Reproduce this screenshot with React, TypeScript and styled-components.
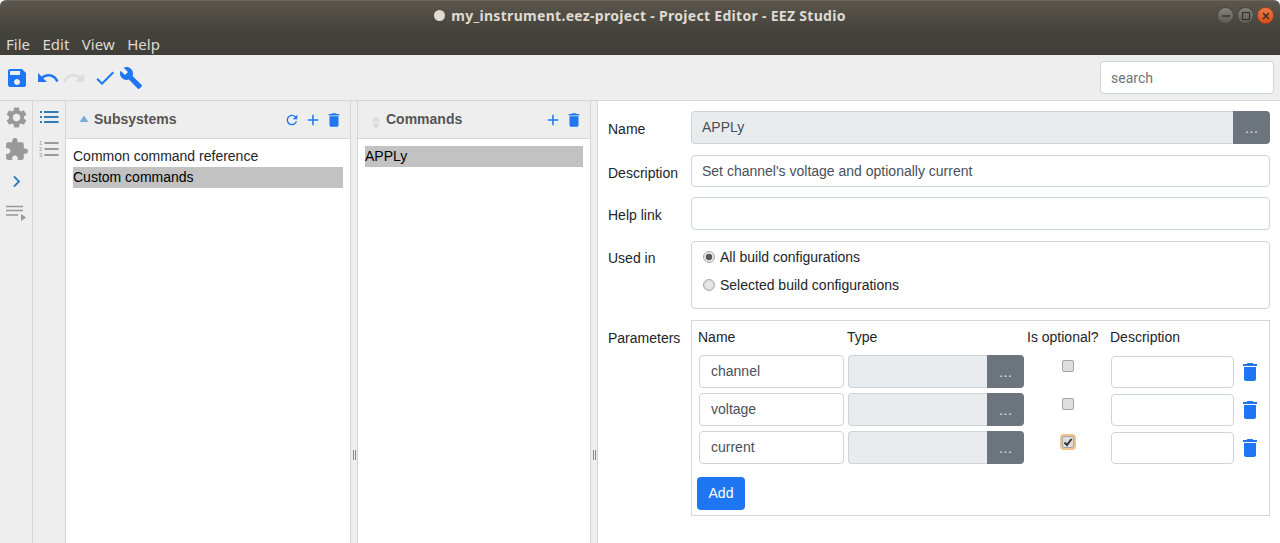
import React from 'react';
import styled, { createGlobalStyle } from 'styled-components';
import {
  MdAdd,
  MdBuild,
  MdCheck,
  MdChevronRight,
  MdDelete,
  MdExtension,
  MdRedo,
  MdRefresh,
  MdSave,
  MdSettings,
  MdUndo,
} from 'react-icons/md';

const GlobalStyle = createGlobalStyle`
  html, body { margin: 0; padding: 0; height: 100%; overflow: hidden; }
  body { font-family: "Liberation Sans", Arial, sans-serif; font-size: 14px; color: #212529; background: #fff; }
  * { box-sizing: border-box; }
`;

const Window = styled.div`
  width: 1280px;
  height: 543px;
  display: flex;
  flex-direction: column;
  overflow: hidden;
`;

const Chrome = styled.header`
  height: 55px;
  flex: none;
  background: linear-gradient(#5b574e 0, #45433d 28px, #403e39 55px);
  border-top: 1px solid #6a665c;
  border-radius: 6px 6px 0 0;
`;

const TitleBar = styled.div`
  height: 29px;
  display: grid;
  grid-template-columns: 1fr auto 1fr;
  align-items: center;
`;

const Title = styled.div`
  grid-column: 2;
  display: flex;
  align-items: center;
  gap: 6px;
  font-family: "Noto Sans", sans-serif;
  font-weight: 700;
  font-size: 14px;
  letter-spacing: 0.3px;
  color: #dfdbd2;
  white-space: nowrap;
`;

const TitleDot = styled.span`
  width: 11px;
  height: 11px;
  border-radius: 50%;
  background: #dfdbd2;
`;

const WindowButtons = styled.div`
  grid-column: 3;
  justify-self: end;
  display: flex;
  gap: 3px;
  padding-right: 6px;
`;

const WindowButton = styled.span<{ $close?: boolean }>`
  width: 17px;
  height: 17px;
  border-radius: 50%;
  display: flex;
  align-items: center;
  justify-content: center;
  border: 1px solid ${(p) => (p.$close ? '#a8431c' : '#47453f')};
  background: ${(p) =>
    p.$close
      ? 'linear-gradient(#ec7a48, #dd4f19)'
      : 'linear-gradient(#85827a, #5d5b54)'};
  color: #33312c;
`;

const MenuBar = styled.nav`
  height: 25px;
  display: flex;
  align-items: center;
  gap: 12.5px;
  padding: 2px 0 0 6px;
  font-family: "Noto Sans", sans-serif;
  font-size: 15px;
  color: #dfdbd2;
`;

const Toolbar = styled.div`
  height: 46px;
  flex: none;
  display: flex;
  align-items: center;
  justify-content: space-between;
  padding: 0 6px 0 5px;
  background: #eeeeee;
  border-bottom: 1px solid #d6d6d6;
`;

const ToolGroup = styled.div`
  display: flex;
  align-items: center;
`;

const ToolIcon = styled.span<{ $muted?: boolean; $gap?: number }>`
  display: flex;
  margin-left: ${(p) => p.$gap ?? 0}px;
  color: ${(p) => (p.$muted ? '#dcdcdc' : '#1f76f2')};
`;

const Search = styled.input`
  width: 174px;
  height: 33px;
  padding: 0 10px;
  border: 1px solid #ced4da;
  border-radius: 4px;
  background: #fff;
  font-family: Roboto, sans-serif;
  font-size: 14px;
  &::placeholder { color: #6c757d; opacity: 1; }
`;

const Body = styled.div`
  flex: 1;
  min-height: 0;
  display: flex;
`;

const Rail = styled.aside`
  width: 33px;
  flex: none;
  display: flex;
  flex-direction: column;
  background: #eeeeee;
  border-right: 1px solid #d6d6d6;
`;

const RailIcon = styled.span<{ $active?: boolean }>`
  height: 32px;
  display: flex;
  align-items: center;
  justify-content: center;
  color: ${(p) => (p.$active ? '#337bb7' : '#999')};
`;

const Panel = styled.section<{ $width: number }>`
  width: ${(p) => p.$width}px;
  flex: none;
  display: flex;
  flex-direction: column;
`;

const PanelHeader = styled.div`
  height: 38px;
  display: flex;
  align-items: center;
  padding: 0 7px 2px 12px;
  background: #eeeeee;
  border-bottom: 1px solid #d6d6d6;
`;

const SortMark = styled.svg`
  width: 12px;
  height: 22px;
  margin-right: 4px;
  flex: none;
`;

const PanelTitle = styled.h2`
  flex: 1;
  margin: 0;
  font-size: 14px;
  font-weight: 700;
  color: #555;
`;

const HeaderIcons = styled.div`
  display: flex;
  align-items: center;
  gap: 3px;
  padding-top: 3px;
  color: #1f76f2;
`;

const RefreshIcon = styled(MdRefresh)`
  margin-right: 1px;
`;

const List = styled.ul`
  margin: 0;
  padding: 7px;
  list-style: none;
`;

const ListItem = styled.li<{ $selected?: boolean }>`
  height: 21px;
  line-height: 21px;
  color: ${(p) => (p.$selected ? '#000' : '#212529')};
  background: ${(p) => (p.$selected ? '#c2c2c2' : 'transparent')};
`;

const Splitter = styled.div`
  width: 8px;
  flex: none;
  display: flex;
  align-items: flex-end;
  justify-content: center;
  gap: 1px;
  padding-bottom: 83px;
  background: #eeeeee;
  border-left: 1px solid #d6d6d6;
  border-right: 1px solid #d6d6d6;
`;

const SplitterGrip = styled.span`
  width: 1px;
  height: 10px;
  background: #888;
`;

const Editor = styled.main`
  flex: 1;
  min-width: 0;
  display: grid;
  grid-template-columns: 83px minmax(0, 1fr);
  align-content: start;
  row-gap: 11px;
  padding: 10px 10px 0;
`;

const Label = styled.label<{ $top?: number; $pull?: boolean }>`
  padding-top: ${(p) => p.$top ?? 8}px;
  margin-top: ${(p) => (p.$pull ? -1 : 0)}px;
  line-height: 21px;
  color: #212529;
`;

const Field = styled.input<{ $pull?: boolean }>`
  width: 100%;
  height: 33px;
  margin-top: ${(p) => (p.$pull ? -1 : 0)}px;
  padding: 0 10px;
  font: inherit;
  color: #495057;
  background: #fff;
  border: 1px solid #ced4da;
  border-radius: 4px;
  outline: none;
`;

const NameField = styled(Field)`
  padding: 0 11px 2px;
`;

const InputGroup = styled.div`
  display: flex;
  height: 33px;
`;

const ReadonlyField = styled(Field)`
  flex: 1;
  min-width: 0;
  padding-bottom: 2px;
  background: #e9ecef;
  border-right: 0;
  border-radius: 4px 0 0 4px;
`;

const DotsButton = styled.button`
  width: 37px;
  flex: none;
  padding: 0;
  color: #e6e8ea;
  font: inherit;
  background: #6c757d;
  border: 0;
  border-radius: 0 4px 4px 0;
`;

const Fieldset = styled.div`
  height: 68px;
  padding: 1px 11px;
  display: flex;
  flex-direction: column;
  border: 1px solid #ced4da;
  border-radius: 4px;
`;

const RadioRow = styled.label`
  height: 28px;
  display: flex;
  align-items: center;
  gap: 5px;
  color: #212529;
`;

const Radio = styled.input`
  appearance: none;
  width: 12px;
  height: 12px;
  margin: 0;
  border: 1px solid #a9a9a9;
  border-radius: 50%;
  background: radial-gradient(circle, #ededed, #d4d4d4);
  &:checked {
    background: radial-gradient(circle, #5a5a5a 0 3px, #e6e6e6 3.6px);
  }
`;

const ParamsBox = styled.div`
  height: 196px;
  padding: 5px 5px 0;
  border: 1px solid #d6d6d6;
`;

const ParamGrid = styled.div`
  display: grid;
  grid-template-columns: 149px 180px 83px 127px 28px;
  grid-template-rows: 27px repeat(3, 38px);
`;

const HeadCell = styled.div`
  padding: 1px 0 0 1px;
  line-height: 21px;
  color: #212529;
`;

const Cell = styled.div`
  padding: 2px;
`;

const CheckCell = styled.div`
  display: flex;
  justify-content: center;
  padding-top: 7px;
`;

const Check = styled.span<{ $focus?: boolean }>`
  width: 12px;
  height: 12px;
  display: flex;
  align-items: center;
  justify-content: center;
  border: 1px solid #a5a5a5;
  border-radius: 2px;
  background: #dedede;
  color: #333;
  box-shadow: ${(p) => (p.$focus ? '0 0 0 2px #efc48c' : 'none')};
`;

const DescCell = styled.div`
  padding: 3px 2px 0;
`;

const DescField = styled(Field)`
  height: 32px;
`;

const TrashCell = styled.div`
  padding: 7px 0 0 2px;
  color: #1f76f2;
`;

const AddButton = styled.button`
  display: block;
  width: 48px;
  height: 33px;
  margin-top: 10px;
  padding: 0 0 2px;
  font: inherit;
  color: #fff;
  background: #1f76f2;
  border: 0;
  border-radius: 4px;
`;

const params = [
  { name: 'channel', optional: false },
  { name: 'voltage', optional: false },
  { name: 'current', optional: true },
];

function Sort({ up, down }: { up: string; down: string }) {
  return (
    <SortMark viewBox="0 0 12 22">
      <path d="M6 7.500L10.500 14H1.500z" fill={up} />
      <path d="M6 22l4-6.500H2z" fill={down} />
    </SortMark>
  );
}

export default function App() {
  return (
    <Window>
      <GlobalStyle />
      <Chrome>
        <TitleBar>
          <Title>
            <TitleDot />
            my_instrument.eez-project - Project Editor - EEZ Studio
          </Title>
          <WindowButtons>
            <WindowButton>
              <svg width="10" height="10" viewBox="0 0 10 10">
                <path d="M1 5h8" stroke="currentColor" strokeWidth="1.4" />
              </svg>
            </WindowButton>
            <WindowButton>
              <svg width="10" height="10" viewBox="0 0 10 10">
                <rect x="1.500" y="1.500" width="7" height="7" fill="none" stroke="currentColor" strokeWidth="1.2" />
              </svg>
            </WindowButton>
            <WindowButton $close>
              <svg width="10" height="10" viewBox="0 0 10 10">
                <path d="M2 2l6 6M8 2l-6 6" stroke="currentColor" strokeWidth="1.5" />
              </svg>
            </WindowButton>
          </WindowButtons>
        </TitleBar>
        <MenuBar>
          <span>File</span>
          <span>Edit</span>
          <span>View</span>
          <span>Help</span>
        </MenuBar>
      </Chrome>

      <Toolbar>
        <ToolGroup>
          <ToolIcon><MdSave size={24} /></ToolIcon>
          <ToolIcon $gap={7}><MdUndo size={24} /></ToolIcon>
          <ToolIcon $muted $gap={2}><MdRedo size={24} /></ToolIcon>
          <ToolIcon $gap={7}><MdCheck size={24} /></ToolIcon>
          <ToolIcon $gap={2}><MdBuild size={24} /></ToolIcon>
        </ToolGroup>
        <Search placeholder="search" readOnly />
      </Toolbar>

      <Body>
        <Rail>
          <RailIcon><MdSettings size={25} /></RailIcon>
          <RailIcon><MdExtension size={25} /></RailIcon>
          <RailIcon $active><MdChevronRight size={23} /></RailIcon>
          <RailIcon>
            <svg width="22" height="16" viewBox="0 0 22 16">
              <path d="M1 1.500h17M1 5.500h17M1 10h12" stroke="currentColor" strokeWidth="1.500" />
              <path d="M16 9l5 3.500-5 3.500z" fill="currentColor" />
            </svg>
          </RailIcon>
        </Rail>
        <Rail>
          <RailIcon $active>
            <svg width="20" height="12" viewBox="0 0 20 12">
              <path d="M1 0h2v2H1zM1 5h2v2H1zM1 10h2v2H1zM5 0h14.500v2H5zM5 5h14.500v2H5zM5 10h14.500v2H5z" fill="currentColor" />
            </svg>
          </RailIcon>
          <RailIcon>
            <svg width="20" height="18" viewBox="0 0 20 18">
              <path d="M5.500 3h14M5.500 9h14M5.500 15h14" stroke="currentColor" strokeWidth="2" />
              <text x="0" y="5" fontSize="6" fill="currentColor" fontFamily="Liberation Sans">1</text>
              <text x="0" y="11" fontSize="6" fill="currentColor" fontFamily="Liberation Sans">2</text>
              <text x="0" y="17" fontSize="6" fill="currentColor" fontFamily="Liberation Sans">3</text>
            </svg>
          </RailIcon>
        </Rail>

        <Panel $width={284}>
          <PanelHeader>
            <Sort up="#79aedb" down="transparent" />
            <PanelTitle>Subsystems</PanelTitle>
            <HeaderIcons>
              <RefreshIcon size={16} />
              <MdAdd size={18} />
              <MdDelete size={18} />
            </HeaderIcons>
          </PanelHeader>
          <List>
            <ListItem>Common command reference</ListItem>
            <ListItem $selected>Custom commands</ListItem>
          </List>
        </Panel>
        <Splitter><SplitterGrip /><SplitterGrip /></Splitter>

        <Panel $width={232}>
          <PanelHeader>
            <Sort up="#dcdcdc" down="#dcdcdc" />
            <PanelTitle>Commands</PanelTitle>
            <HeaderIcons>
              <MdAdd size={18} />
              <MdDelete size={18} />
            </HeaderIcons>
          </PanelHeader>
          <List>
            <ListItem $selected>APPLy</ListItem>
          </List>
        </Panel>
        <Splitter><SplitterGrip /><SplitterGrip /></Splitter>

        <Editor>
          <Label>Name</Label>
          <InputGroup>
            <ReadonlyField value="APPLy" readOnly />
            <DotsButton>…</DotsButton>
          </InputGroup>

          <Label>Description</Label>
          <DescField value="Set channel's voltage and optionally current" readOnly />

          <Label $pull>Help link</Label>
          <Field $pull value="" readOnly />

          <Label $top={7}>Used in</Label>
          <Fieldset>
            <RadioRow><Radio type="radio" name="used" defaultChecked />All build configurations</RadioRow>
            <RadioRow><Radio type="radio" name="used" />Selected build configurations</RadioRow>
          </Fieldset>

          <Label>Parameters</Label>
          <ParamsBox>
            <ParamGrid>
              <HeadCell>Name</HeadCell>
              <HeadCell>Type</HeadCell>
              <HeadCell>Is optional?</HeadCell>
              <HeadCell>Description</HeadCell>
              <HeadCell />
              {params.map((param) => (
                <React.Fragment key={param.name}>
                  <Cell><NameField value={param.name} readOnly /></Cell>
                  <Cell>
                    <InputGroup>
                      <ReadonlyField value="" readOnly />
                      <DotsButton>…</DotsButton>
                    </InputGroup>
                  </Cell>
                  <CheckCell>
                    <Check $focus={param.optional}>
                      {param.optional && (
                        <svg width="10" height="10" viewBox="0 0 10 10">
                          <path d="M1.500 5.500l2.500 2.500 4.500-6" fill="none" stroke="currentColor" strokeWidth="2" />
                        </svg>
                      )}
                    </Check>
                  </CheckCell>
                  <DescCell><DescField value="" readOnly /></DescCell>
                  <TrashCell><MdDelete size={24} /></TrashCell>
                </React.Fragment>
              ))}
            </ParamGrid>
            <AddButton>Add</AddButton>
          </ParamsBox>
        </Editor>
      </Body>
    </Window>
  );
}
